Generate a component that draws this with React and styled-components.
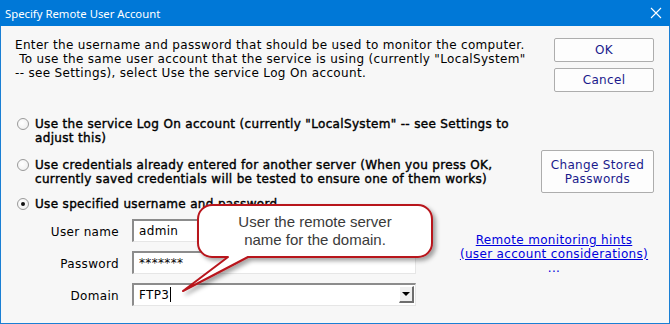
import React from "react";
import styled, { createGlobalStyle } from "styled-components";

const GlobalStyle = createGlobalStyle`
  html, body {
    margin: 0;
    padding: 0;
    background: #ffffff;
  }
  body {
    font-family: "DejaVu Sans", Verdana, sans-serif;
    font-size: 12px;
    letter-spacing: 0.33px;
    color: #000;
  }
`;

const Window = styled.div`
  position: relative;
  width: 670px;
  height: 324px;
  display: flex;
  flex-direction: column;
  overflow: hidden;
`;

const TitleBar = styled.div`
  height: 26px;
  flex: none;
  background: #0078d7;
  color: #ffffff;
  font-family: "Noto Sans", "Open Sans", sans-serif;
  font-size: 11.3px;
  letter-spacing: 0;
  display: flex;
  align-items: center;
  justify-content: space-between;
  padding: 0 8px 0 5px;
`;

const CloseIcon = styled.svg`
  width: 12px;
  height: 12px;
  display: block;
`;

const Body = styled.div`
  flex: 1;
  box-sizing: border-box;
  background: #f7f7f7;
  border: 1px solid #1a7fd4;
  border-top: none;
  padding: 12px 15px 0 14px;
  display: flex;
  flex-direction: column;
`;

const Row = styled.div`
  display: flex;
  justify-content: space-between;
  align-items: ${(p) => p.$align || "flex-start"};
  margin-top: ${(p) => p.$top || 0}px;
`;

const Intro = styled.p`
  margin: 0;
  line-height: 14px;
  white-space: nowrap;
`;

const ButtonStack = styled.div`
  display: flex;
  flex-direction: column;
  gap: 6px;
`;

const Button = styled.button`
  flex: none;
  width: ${(p) => p.$w || 100}px;
  height: ${(p) => p.$h || 24}px;
  box-sizing: border-box;
  border: 1px solid #adadad;
  border-radius: 2px;
  background: #fdfdfd;
  color: #1a1a8c;
  font-family: inherit;
  font-size: 12px;
  letter-spacing: 0.33px;
  line-height: 14px;
  padding: 0;
  text-align: center;
`;

const Option = styled.div`
  display: flex;
  align-items: flex-start;
  margin-top: ${(p) => p.$top || 0}px;
  padding-left: 2px;
`;

const Radio = styled.span`
  flex: none;
  width: 12px;
  height: 12px;
  box-sizing: border-box;
  margin: 1px 6px 0 0;
  border-radius: 50%;
  border: 1px solid #9a9a9a;
  background: radial-gradient(circle at 40% 40%, #ffffff 0, #ececec 100%);
  display: flex;
  align-items: center;
  justify-content: center;

  &::after {
    content: "";
    width: 4px;
    height: 4px;
    border-radius: 50%;
    background: ${(p) => (p.$checked ? "#111" : "transparent")};
  }
`;

const OptionText = styled.div`
  line-height: 14px;
  white-space: nowrap;
  -webkit-text-stroke: 0.4px #000;
`;

const Footer = styled.div`
  display: flex;
  align-items: flex-start;
  margin-top: 8px;
`;

const Form = styled.div`
  display: grid;
  grid-template-columns: 103px 284px;
  column-gap: 13px;
  row-gap: 9px;
  margin-left: 1px;
`;

const Label = styled.label`
  text-align: right;
  align-self: center;
  line-height: 14px;
  padding-top: 2px;
`;

const Field = styled.div`
  position: relative;
  height: 23px;
  box-sizing: border-box;
  background: #ffffff;
  border-top: 2px solid #8c8c8c;
  border-left: 2px solid #8c8c8c;
  border-right: 1px solid #e6e6e6;
  border-bottom: 1px solid #e6e6e6;
  padding: 3px 0 0 5px;
  line-height: 14px;
  display: flex;
  align-items: flex-start;
`;

const Caret = styled.span`
  width: 1px;
  height: 15px;
  background: #000;
  margin-left: 1px;
  margin-top: -1px;
`;

const DropButton = styled.span`
  position: absolute;
  right: 1px;
  top: 1px;
  width: 15px;
  height: 17px;
  box-sizing: border-box;
  background: #f0f0f0;
  border-top: 1px solid #ffffff;
  border-left: 1px solid #ffffff;
  border-right: 2px solid #6e6e6e;
  border-bottom: 2px solid #6e6e6e;
  display: flex;
  align-items: center;
  justify-content: center;

  &::after {
    content: "";
    border-left: 4px solid transparent;
    border-right: 4px solid transparent;
    border-top: 4px solid #000;
  }
`;

const Hints = styled.div`
  width: 200px;
  margin-left: auto;
  margin-top: 14px;
  text-align: center;
  line-height: 14px;
  color: #0000dd;
  white-space: nowrap;
`;

const HintLink = styled.a`
  color: #0000dd;
  text-decoration: underline;
`;

const Callout = styled.div`
  position: absolute;
  left: 180px;
  top: 200px;
  width: 262px;
  height: 100px;
  pointer-events: none;
`;

const CalloutShape = styled.svg`
  position: absolute;
  left: 0;
  top: 0;
  overflow: visible;
`;

const CalloutText = styled.div`
  position: absolute;
  left: 18px;
  top: 13px;
  width: 234px;
  text-align: center;
  font-family: "Liberation Sans", Arial, sans-serif;
  font-size: 15px;
  letter-spacing: 0;
  line-height: 18px;
  color: #3a3a3a;
`;

const App = () => {
  return (
    <>
      <GlobalStyle />
      <Window>
        <TitleBar>
          <span>Specify Remote User Account</span>
          <CloseIcon viewBox="0 0 12 12">
            <path d="M1 1 L11 11 M11 1 L1 11" stroke="#ffffff" strokeWidth="1.1" />
          </CloseIcon>
        </TitleBar>
        <Body>
          <Row>
            <Intro>
              Enter the username and password that should be used to monitor the computer.
              <br />
              &nbsp;To use the same user account that the service is using (currently "LocalSystem"
              <br />
              -- see Settings), select Use the service Log On account.
            </Intro>
            <ButtonStack>
              <Button>OK</Button>
              <Button>Cancel</Button>
            </ButtonStack>
          </Row>

          <Option $top={25}>
            <Radio />
            <OptionText>
              Use the service Log On account (currently "LocalSystem" -- see Settings to
              <br />
              adjust this)
            </OptionText>
          </Option>

          <Row $align="center" $top={5}>
            <Option>
              <Radio />
              <OptionText>
                Use credentials already entered for another server (When you press OK,
                <br />
                currently saved credentials will be tested to ensure one of them works)
              </OptionText>
            </Option>
            <Button $w={113} $h={43}>
              Change Stored
              <br />
              Passwords
            </Button>
          </Row>

          <Option $top={4}>
            <Radio $checked />
            <OptionText>Use specified username and password</OptionText>
          </Option>

          <Footer>
            <Form>
              <Label>User name</Label>
              <Field>admin</Field>
              <Label>Password</Label>
              <Field>*******</Field>
              <Label>Domain</Label>
              <Field>
                FTP3
                <Caret />
                <DropButton />
              </Field>
            </Form>
            <Hints>
              <HintLink href="#">Remote monitoring hints</HintLink>
              <br />
              <HintLink href="#">(user account considerations)</HintLink>
              <br />
              ...
            </Hints>
          </Footer>
        </Body>

        <Callout>
          <CalloutShape width="262" height="100" viewBox="0 0 262 100">
            <defs>
              <filter id="bubbleShadow" x="-10%" y="-10%" width="130%" height="140%">
                <feDropShadow dx="3" dy="3" stdDeviation="2" floodColor="#000" floodOpacity="0.35" />
              </filter>
            </defs>
            <path
              d="M32 5 H238 A14 14 0 0 1 252 19 V43 A14 14 0 0 1 238 57 H68 L3 91 L48 57 H32 A14 14 0 0 1 18 43 V19 A14 14 0 0 1 32 5 Z"
              fill="#ffffff"
              stroke="#b8141c"
              strokeWidth="2"
              strokeLinejoin="round"
              filter="url(#bubbleShadow)"
            />
          </CalloutShape>
          <CalloutText>
            User the remote server
            <br />
            name for the domain.
          </CalloutText>
        </Callout>
      </Window>
    </>
  );
};

export default App;
